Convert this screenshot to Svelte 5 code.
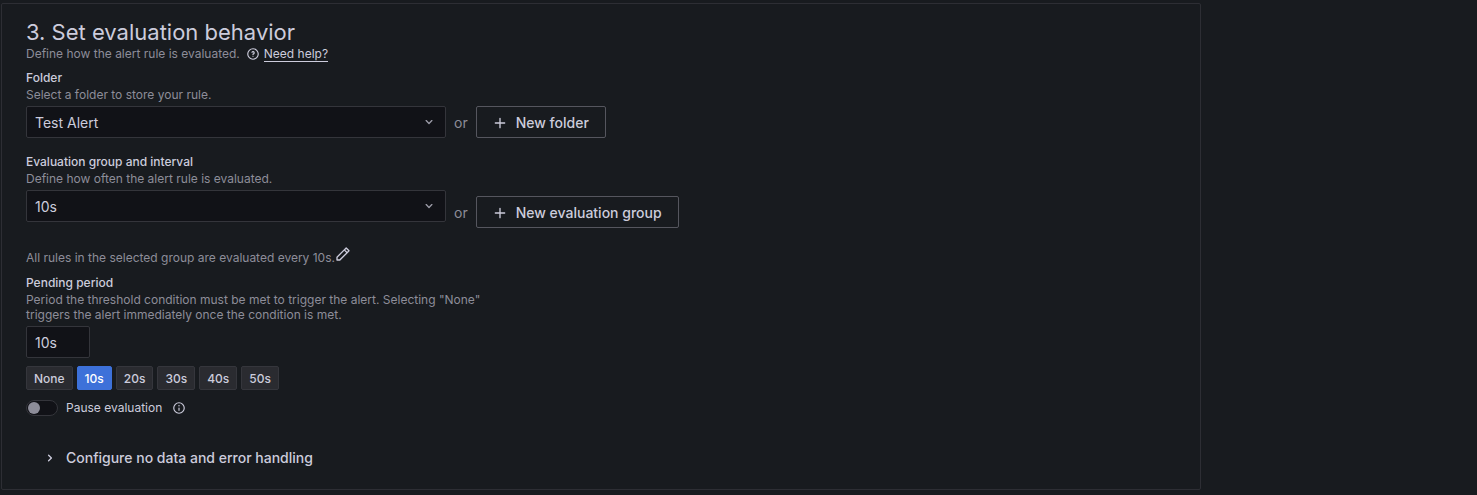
<script>
  const icons = {
    down: 'M17,9.17a1,1,0,0,0-1.41,0L12,12.71,8.46,9.17a1,1,0,0,0-1.41,0,1,1,0,0,0,0,1.42l4.24,4.24a1,1,0,0,0,1.42,0L17,10.59A1,1,0,0,0,17,9.17Z',
    right: 'M14.83,11.29,10.59,7.05a1,1,0,0,0-1.42,0,1,1,0,0,0,0,1.41L12.71,12,9.17,15.54a1,1,0,0,0,0,1.41,1,1,0,0,0,.71.29,1,1,0,0,0,.71-.29l4.24-4.24A1,1,0,0,0,14.83,11.29Z',
    plus: 'M19,11H13V5a1,1,0,0,0-2,0v6H5a1,1,0,0,0,0,2h6v6a1,1,0,0,0,2,0V13h6a1,1,0,0,0,0-2Z',
    help: 'M11.29,15.29a1.58,1.58,0,0,0-.12.15.76.76,0,0,0-.09.18.64.64,0,0,0-.06.18,1.36,1.36,0,0,0,0,.2.84.84,0,0,0,.08.38.9.9,0,0,0,.54.54.94.94,0,0,0,.76,0,.9.9,0,0,0,.54-.54A1,1,0,0,0,13,16a1,1,0,0,0-.29-.71A1,1,0,0,0,11.29,15.29ZM12,2A10,10,0,1,0,22,12,10,10,0,0,0,12,2Zm0,18a8,8,0,1,1,8-8A8,8,0,0,1,12,20ZM12,7A3,3,0,0,0,9.4,8.5a1,1,0,1,0,1.73,1A1,1,0,0,1,12,9a1,1,0,0,1,0,2,1,1,0,0,0-1,1v1a1,1,0,0,0,2,0v-.18A3,3,0,0,0,12,7Z',
    info: 'M12,2A10,10,0,1,0,22,12,10,10,0,0,0,12,2Zm0,18a8,8,0,1,1,8-8A8,8,0,0,1,12,20Zm0-9a1,1,0,0,0-1,1v4a1,1,0,0,0,2,0V12A1,1,0,0,0,12,11Zm0-4a1.25,1.25,0,1,0,1.25,1.25A1.25,1.25,0,0,0,12,7Z',
    pen: 'M22,7.24a1,1,0,0,0-.29-.71L17.47,2.29A1,1,0,0,0,16.76,2a1,1,0,0,0-.71.29L13.22,5.12h0L2.29,16.05a1,1,0,0,0-.29.71V21a1,1,0,0,0,1,1H7.24A1,1,0,0,0,8,21.71L18.87,10.78h0L21.71,8a1.19,1.19,0,0,0,.22-.33,1,1,0,0,0,0-.24.7.7,0,0,0,0-.14ZM6.83,20H4V17.17l9.93-9.93,2.83,2.83ZM18.17,8.66,15.34,5.83l1.42-1.41,2.82,2.82Z',
  };
  const periods = ['None', '10s', '20s', '30s', '40s', '50s'];
  let pending = $state('10s');
  let paused = $state(false);
</script>

{#snippet icon(name)}
  <svg class="icon" viewBox="0 0 24 24" aria-hidden="true"><path d={icons[name]} /></svg>
{/snippet}

<section class="step">
  <h3>3. Set evaluation behavior</h3>
  <p class="intro">
    <span>Define how the alert rule is evaluated.</span>
    {@render icon('help')}
    <a href="#help">Need help?</a>
  </p>

  <div class="field">
    <label for="folder">Folder</label>
    <p>Select a folder to store your rule.</p>
    <div class="row">
      <div class="select">
        <select id="folder"><option>Test Alert</option></select>
        {@render icon('down')}
      </div>
      <span class="or">or</span>
      <button class="outline" type="button">{@render icon('plus')}New folder</button>
    </div>
  </div>

  <div class="field group">
    <label for="group">Evaluation group and interval</label>
    <p>Define how often the alert rule is evaluated.</p>
    <div class="row">
      <div class="select">
        <select id="group"><option>10s</option></select>
        {@render icon('down')}
      </div>
      <span class="or low">or</span>
      <button class="outline low" type="button">{@render icon('plus')}New evaluation group</button>
    </div>
  </div>

  <div class="summary">
    <span>All rules in the selected group are evaluated every 10s.</span>
    <button type="button" aria-label="Edit">{@render icon('pen')}</button>
  </div>

  <div class="field pending">
    <label for="pending">Pending period</label>
    <p>Period the threshold condition must be met to trigger the alert. Selecting "None" triggers the alert immediately once the condition is met.</p>
    <input id="pending" type="text" bind:value={pending} />
    <div class="picks">
      {#each periods as period}
        <button type="button" class:active={pending === period} onclick={() => (pending = period)}>{period}</button>
      {/each}
    </div>
  </div>

  <div class="pause">
    <input id="pause" type="checkbox" role="switch" bind:checked={paused} />
    <label for="pause">Pause evaluation</label>
    {@render icon('info')}
  </div>

  <button class="collapse" type="button">{@render icon('right')}Configure no data and error handling</button>
</section>

<style>
  :global(body) {
    background: #181b1f;
    color: #ccccdc;
    font: 14px/22px Inter, sans-serif;
  }
  .step {
    box-sizing: border-box;
    max-width: 1200px;
    margin: 3px 1px 4px;
    padding: 15px 24px;
    border: 1px solid #2d2e34;
    border-radius: 2px;
  }
  h3 {
    margin: 0 0 1px;
    font-size: 22px;
    line-height: 26px;
    font-weight: 400;
  }
  p {
    margin: 0;
    color: #8d8d99;
    font-size: 12px;
    line-height: 15px;
  }
  .icon {
    flex: none;
    width: 16px;
    height: 16px;
    fill: currentColor;
  }
  button, input, select {
    box-sizing: border-box;
    margin: 0;
    font: inherit;
    color: inherit;
  }
  button {
    display: flex;
    align-items: center;
    cursor: pointer;
  }
  .intro {
    display: flex;
    align-items: center;
    line-height: 16px;
  }
  .intro .icon {
    width: 14px;
    height: 14px;
    margin: 0 4px 0 6px;
    color: #ccccdc;
  }
  a {
    color: #ccccdc;
    text-decoration: none;
    border-bottom: 1px solid;
    line-height: 14px;
  }
  .field {
    margin-top: 8px;
  }
  .field label {
    display: block;
    font-size: 12px;
    line-height: 15px;
    font-weight: 500;
    margin-bottom: 2px;
  }
  .row {
    display: flex;
    align-items: flex-start;
    gap: 8px;
    margin-top: 4px;
  }
  .select {
    display: grid;
    flex: 0 1 420px;
    align-items: center;
  }
  .select > :global(*) {
    grid-area: 1 / 1;
  }
  .select .icon {
    justify-self: end;
    margin-right: 9px;
    color: #9c9ca8;
    pointer-events: none;
  }
  select, .field input {
    appearance: none;
    width: 100%;
    height: 32px;
    padding: 0 8px;
    border: 1px solid #34353b;
    border-radius: 2px;
    background: #111217;
  }
  select {
    padding-top: 1px;
  }
  .or {
    line-height: 34px;
    height: 32px;
    color: #8d8d99;
  }
  .outline {
    height: 32px;
    padding: 1px 16px 0 15px;
    gap: 8px;
    border: 1px solid #55565e;
    border-radius: 2px;
    background: transparent;
    font-weight: 500;
  }
  .low {
    margin-top: 6px;
  }
  .group {
    margin-top: 16px;
  }
  .summary {
    display: flex;
    margin-top: 16px;
    color: #8d8d99;
    font-size: 12px;
    line-height: 28px;
  }
  .summary button {
    height: 20px;
    padding: 0;
    border: 0;
    background: none;
    color: #ccccdc;
  }
  .pending {
    margin-top: 3px;
  }
  .pending p {
    max-width: 480px;
  }
  .pending input {
    display: block;
    width: 64px;
    margin-top: 4px;
  }
  .picks {
    display: flex;
    gap: 4px;
    margin-top: 8px;
  }
  .picks button {
    height: 24px;
    padding: 1px 7px 0;
    border: 1px solid #35363c;
    border-radius: 2px;
    background: #2a2b30;
    font-size: 12px;
    font-weight: 500;
  }
  .picks .active {
    border-color: #3d71d9;
    background: #3d71d9;
    color: #fff;
  }
  .pause {
    display: flex;
    align-items: center;
    margin-top: 10px;
    font-size: 12px;
    line-height: 16px;
  }
  .pause input {
    appearance: none;
    display: flex;
    align-items: center;
    width: 32px;
    height: 16px;
    padding: 0 1px;
    border: 1px solid #34353b;
    border-radius: 8px;
    background: #111217;
  }
  .pause input::before {
    content: '';
    width: 12px;
    height: 12px;
    border-radius: 50%;
    background: #8d8d99;
  }
  .pause input:checked {
    justify-content: flex-end;
    background: #3d71d9;
  }
  .pause label {
    margin: 0 10px 0 8px;
  }
  .pause .icon {
    width: 14px;
    height: 14px;
  }
  .collapse {
    gap: 8px;
    height: 32px;
    margin-top: 26px;
    padding: 0 16px;
    border: 0;
    background: none;
    font-weight: 500;
  }
</style>
